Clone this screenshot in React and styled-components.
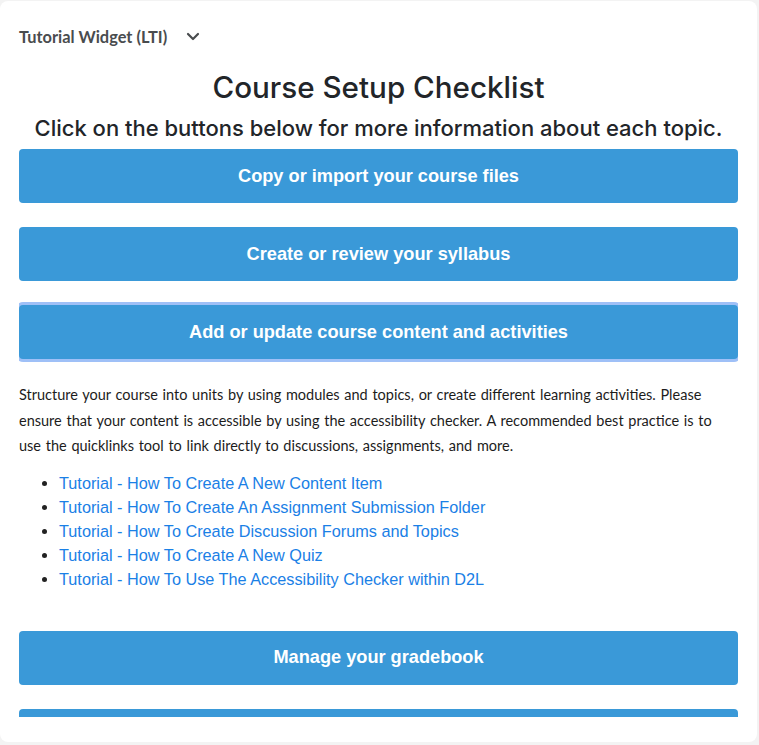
import React from "react";
import styled, { createGlobalStyle } from "styled-components";

const Global = createGlobalStyle`
  html, body { margin: 0; padding: 0; background: #f3f3f3; }
  * { box-sizing: border-box; }
`;

const Card = styled.div`
  width: 757px;
  height: 741px;
  margin-top: 1px;
  background: #fff;
  border-radius: 8px;
  padding: 0 19px 25px;
  display: flex;
  flex-direction: column;
`;

const Header = styled.div`
  display: flex;
  align-items: center;
  gap: 19px;
  height: 24px;
  margin-top: 23px;
  font-family: Lato, "Open Sans", sans-serif;
  font-weight: 700;
  font-size: 16.4px;
  color: #494c4e;
`;

const Frame = styled.div`
  flex: 1;
  margin-top: 12px;
  overflow: hidden;
  font-family: "Liberation Sans", Arial, sans-serif;
`;

const Title = styled.h1`
  margin: 9px 0 0;
  text-align: center;
  font-family: Inter, "Liberation Sans", sans-serif;
  font-weight: 500;
  font-size: 29.6px;
  line-height: 36px;
  color: #222529;
`;

const Subtitle = styled.h2`
  margin: 10px 0 8px;
  text-align: center;
  font-family: Inter, "Liberation Sans", sans-serif;
  font-weight: 500;
  font-size: 22px;
  line-height: 26px;
  color: #222529;
`;

const TopicButton = styled.button`
  display: block;
  width: 100%;
  height: 54px;
  border: 0;
  border-radius: 4px;
  background: #3a99d8;
  color: #fff;
  font-family: "Liberation Sans", Arial, sans-serif;
  font-weight: 700;
  font-size: 18.2px;
  box-shadow: ${(p) => (p.$focused ? "0 0 0 3px rgba(80, 140, 240, 0.55)" : "none")};
  margin: 0 0 ${(p) => (p.$last ? "0" : "24px")};
`;

const Body = styled.p`
  margin: 23px 0 12px;
  font-family: Lato, "Open Sans", sans-serif;
  font-size: 14.5px;
  word-spacing: 1px;
  line-height: 25.5px;
  color: #1c1c1c;
`;

const Links = styled.ul`
  margin: 0 0 40px;
  padding-left: 40px;
  font-size: 16.25px;
  line-height: 24px;
  color: #222;
`;

const Link = styled.a`
  color: #1a80e6;
  text-decoration: none;
`;

const links = [
  "Tutorial - How To Create A New Content Item",
  "Tutorial - How To Create An Assignment Submission Folder",
  "Tutorial - How To Create Discussion Forums and Topics",
  "Tutorial - How To Create A New Quiz",
  "Tutorial - How To Use The Accessibility Checker within D2L",
];

export default function App() {
  return (
    <>
      <Global />
      <Card>
        <Header>
          <span>Tutorial Widget (LTI)</span>
          <svg width="14" height="9" viewBox="0 0 14 9" fill="none">
            <path d="M2 2l5 5 5-5" stroke="#494c4e" strokeWidth="2.2" strokeLinecap="round" strokeLinejoin="round" />
          </svg>
        </Header>
        <Frame>
          <Title>Course Setup Checklist</Title>
          <Subtitle>Click on the buttons below for more information about each topic.</Subtitle>
          <TopicButton>Copy or import your course files</TopicButton>
          <TopicButton>Create or review your syllabus</TopicButton>
          <TopicButton $focused $last>Add or update course content and activities</TopicButton>
          <Body>
            Structure your course into units by using modules and topics, or create different learning activities. Please
            ensure that your content is accessible by using the accessibility checker. A recommended best practice is to
            use the quicklinks tool to link directly to discussions, assignments, and more.
          </Body>
          <Links>
            {links.map((l) => (
              <li key={l}>
                <Link href="#">{l}</Link>
              </li>
            ))}
          </Links>
          <TopicButton>Manage your gradebook</TopicButton>
          <TopicButton>Communicate with your students</TopicButton>
        </Frame>
      </Card>
    </>
  );
}
